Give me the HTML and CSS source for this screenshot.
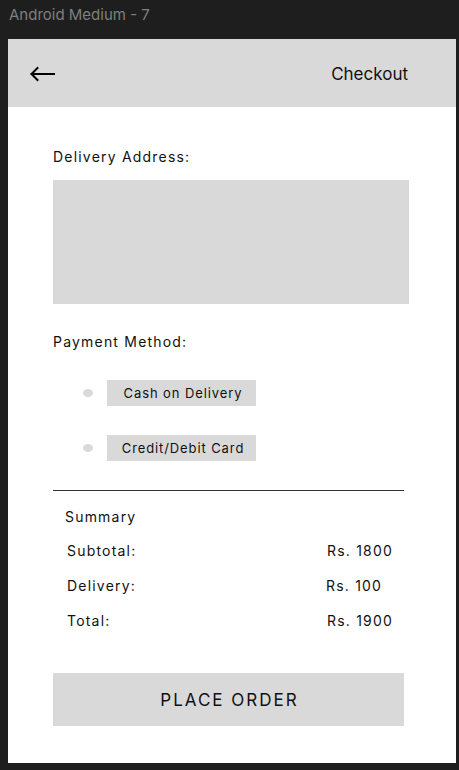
FILE: index.html
```html
<!DOCTYPE html>
<html lang="en">
<head>
<meta charset="utf-8">
<title>Checkout</title>
<link rel="stylesheet" href="styles.css">
</head>
<body>
<div class="frame-title">Android Medium - 7</div>
<div class="frame">
  <header class="topbar">
    <svg class="back" width="26" height="16" viewBox="0 0 26 16" aria-hidden="true">
      <path d="M25 8H2.5M8.5 2L2.5 8L8.5 14" fill="none" stroke="#000" stroke-width="2" stroke-linecap="square"/>
    </svg>
    <span class="title">Checkout</span>
  </header>
  <main class="content">
    <div class="label label-address">Delivery Address:</div>
    <div class="address-box"></div>
    <div class="label label-payment">Payment Method:</div>
    <div class="option option-first"><span class="dot"></span><span class="opt-btn">Cash on Delivery</span></div>
    <div class="option"><span class="dot"></span><span class="opt-btn">Credit/Debit Card</span></div>
    <hr class="divider">
    <div class="summary-title">Summary</div>
    <div class="row"><span>Subtotal:</span><span>Rs. 1800</span></div>
    <div class="row"><span>Delivery:</span><span class="amt-short">Rs. 100</span></div>
    <div class="row"><span>Total:</span><span>Rs. 1900</span></div>
    <button class="place">PLACE ORDER</button>
  </main>
</div>
</body>
</html>
```
FILE: styles.css
```css
* { box-sizing: border-box; }
html, body { margin: 0; padding: 0; }
body {
  background: #1e1e1e;
  font-family: Inter, "Liberation Sans", sans-serif;
  color: #111;
  height: 770px;
  overflow: hidden;
}
.frame-title {
  height: 39px;
  padding: 5px 0 0 9px;
  font-size: 15px;
  line-height: 20px;
  color: #7f7f7f;
}
.frame {
  margin-left: 8px;
  width: 448px;
  height: 724px;
  background: #fff;
}
.topbar {
  height: 68px;
  background: #d9d9d9;
  display: flex;
  align-items: center;
  justify-content: space-between;
  padding: 1px 47px 0 21px;
}
.back { display: block; }
.title {
  font-size: 17px;
  line-height: 20px;
  color: #111;
  padding-right: 1px;
}
.content {
  padding: 0 47px 0 45px;
  display: flex;
  flex-direction: column;
}
.label {
  font-size: 14px;
  line-height: 17px;
  letter-spacing: 1.2px;
}
.label-address { margin-top: 41px; }
.address-box {
  margin-top: 15px;
  width: 356px;
  height: 124px;
  background: #d9d9d9;
}
.label-payment { margin-top: 29px; }
.option {
  display: flex;
  align-items: center;
  margin-top: 29px;
  padding-left: 30px;
  gap: 14px;
}
.option-first { margin-top: 30px; }
.dot {
  width: 10px;
  height: 8px;
  border-radius: 50%;
  background: #d9d9d9;
}
.opt-btn {
  width: 149px;
  height: 26px;
  background: #d9d9d9;
  display: flex;
  align-items: center;
  justify-content: center;
  font-size: 13px;
  letter-spacing: 0.9px;
  color: #111;
  padding-left: 3px;
}
.divider {
  margin: 29px 0 0 0;
  width: 351px;
  border: 0;
  border-top: 1px solid #333;
  height: 0;
}
.summary-title {
  margin-top: 17px;
  padding-left: 12px;
  font-size: 14px;
  line-height: 17px;
  letter-spacing: 1.2px;
}
.row {
  display: grid;
  grid-template-columns: 260px auto;
  padding-left: 14px;
  margin-top: 17px;
  font-size: 14px;
  line-height: 17px;
  letter-spacing: 1.2px;
}
.row + .row { margin-top: 18px; }
.amt-short { margin-left: -1px; }
.place {
  margin-top: 44px;
  width: 351px;
  height: 53px;
  border: 0;
  background: #d9d9d9;
  font-family: Inter, "Liberation Sans", sans-serif;
  font-size: 17px;
  letter-spacing: 2px;
  color: #111;
  padding: 0 0 0 2px;
}
```
